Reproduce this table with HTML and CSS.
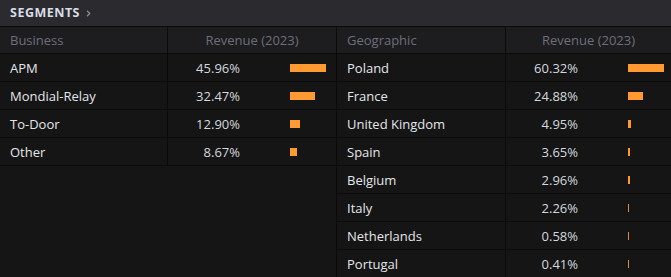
FILE: index.html
```html
<!DOCTYPE html>
<html>
<head>
<meta charset="utf-8">
<link rel="stylesheet" href="styles.css">
</head>
<body>
<div class="topbar">
  <span class="title">SEGMENTS</span>
  <svg class="chev" width="5" height="7" viewBox="0 0 5 7"><polyline points="1,0.8 3.8,3.5 1,6.2" fill="none" stroke="#8b8e96" stroke-width="1.2"/></svg>
</div>
<div class="tables">
  <div class="table left">
    <div class="row head"><div class="c1">Business</div><div class="c2 hc">Revenue (2023)</div></div>
    <div class="row"><div class="c1">APM</div><div class="c2"><span class="val">45.96%</span><span class="bar" style="width:36px"></span></div></div>
    <div class="row"><div class="c1">Mondial-Relay</div><div class="c2"><span class="val">32.47%</span><span class="bar" style="width:25px"></span></div></div>
    <div class="row"><div class="c1">To-Door</div><div class="c2"><span class="val">12.90%</span><span class="bar" style="width:10px"></span></div></div>
    <div class="row"><div class="c1">Other</div><div class="c2"><span class="val">8.67%</span><span class="bar" style="width:7px"></span></div></div>
  </div>
  <div class="table right">
    <div class="row head"><div class="c1">Geographic</div><div class="c2 hc">Revenue (2023)</div></div>
    <div class="row"><div class="c1">Poland</div><div class="c2"><span class="val">60.32%</span><span class="bar" style="width:36px"></span></div></div>
    <div class="row"><div class="c1">France</div><div class="c2"><span class="val">24.88%</span><span class="bar" style="width:15px"></span></div></div>
    <div class="row"><div class="c1">United Kingdom</div><div class="c2"><span class="val">4.95%</span><span class="bar" style="width:3px"></span></div></div>
    <div class="row"><div class="c1">Spain</div><div class="c2"><span class="val">3.65%</span><span class="bar" style="width:2px"></span></div></div>
    <div class="row"><div class="c1">Belgium</div><div class="c2"><span class="val">2.96%</span><span class="bar" style="width:2px"></span></div></div>
    <div class="row"><div class="c1">Italy</div><div class="c2"><span class="val">2.26%</span><span class="bar thin" style="width:1px"></span></div></div>
    <div class="row"><div class="c1">Netherlands</div><div class="c2"><span class="val">0.58%</span><span class="bar thin" style="width:1px"></span></div></div>
    <div class="row"><div class="c1">Portugal</div><div class="c2"><span class="val">0.41%</span><span class="bar thin" style="width:1px"></span></div></div>
  </div>
</div>
</body>
</html>
```
FILE: styles.css
```css
html, body {
  margin: 0;
  padding: 0;
  background: #151515;
  font-family: "Open Sans", "Liberation Sans", sans-serif;
  overflow: hidden;
}
.topbar {
  height: 26px;
  background: #2a2a2f;
  border-bottom: 1px solid #0b0b0c;
  display: flex;
  align-items: center;
  padding-left: 10px;
  gap: 6px;
}
.title {
  font-weight: 700;
  font-size: 12.5px;
  letter-spacing: 0.5px;
  color: #d9dde6;
  line-height: 1;
}
.chev {
  display: block;
  margin-top: 1px;
}
.tables {
  display: flex;
}
.table.left {
  width: 336px;
  border-right: 1px solid #0b0b0c;
}
.table.right {
  flex: 1;
}
.row {
  display: grid;
  grid-template-columns: 168px 1fr;
  height: 27px;
  border-bottom: 1px solid #0b0b0c;
  font-size: 13px;
}
.right .row {
  grid-template-columns: 169px 1fr;
}
.row.head {
  height: 26px;
  background: #1d1d20;
}
.c1 {
  border-right: 1px solid #0b0b0c;
  padding-left: 10px;
  display: flex;
  align-items: center;
  color: #e4e6ea;
}
.head .c1, .hc {
  color: #6c6f77;
}
.c2 {
  display: flex;
  align-items: center;
}
.hc {
  justify-content: center;
}
.val {
  width: 72px;
  text-align: right;
  color: #d3d8df;
}
.bar {
  margin-left: 50px;
  height: 8px;
  background: #ff9a33;
  margin-top: 1px;
}
.bar.thin {
  background: #d98a3e;
}
```
